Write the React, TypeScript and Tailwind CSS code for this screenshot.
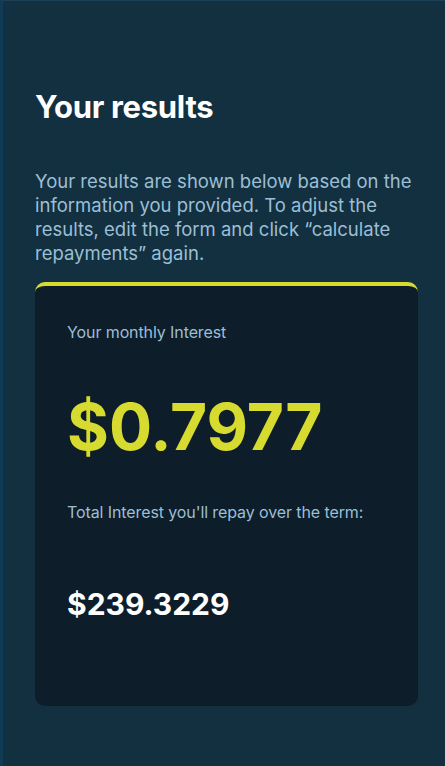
export default function App() {
  return (
    <div
      className="min-h-[766px] w-full bg-[#133040] border-l-[3px] border-l-[#0f3b57] border-t border-t-[#1d4258] pl-[32px] pr-[27px] pt-[86px] pb-[60px]"
      style={{ fontFamily: '"Inter", "Noto Sans", sans-serif' }}
    >
      {/* Heading */}
      <h1 className="text-[31px] font-bold tracking-[-0.3px] text-white leading-[40px]">Your results</h1>

      <p className="mt-[42px] text-[18.5px] leading-[24px] text-[#9bbfd6] tracking-[0px]">
        Your results are shown below based on the information you provided. To adjust the results, edit the form and
        click “calculate repayments” again.
      </p>

      {/* Result card */}
      <div className="mt-[17px] h-[424px] rounded-[10px] border-t-[4px] border-t-[#d8db2f] bg-[#0d1d29] px-[32px] pt-[34px]">
        <p className="text-[16px] text-[#9bbfd6] tracking-[-0.1px]">Your monthly Interest</p>
        <p className="mt-[47px] text-[64px] font-bold leading-[72px] text-[#d8db2f]">$0.7977</p>

        <p className="mt-[37px] text-[16px] text-[#9bbfd6] tracking-[-0.1px]">Total Interest you'll repay over the term:</p>
        <p className="mt-[60px] text-[30px] font-bold leading-[40px] text-white">$239.3229</p>
      </div>
    </div>
  )
}
